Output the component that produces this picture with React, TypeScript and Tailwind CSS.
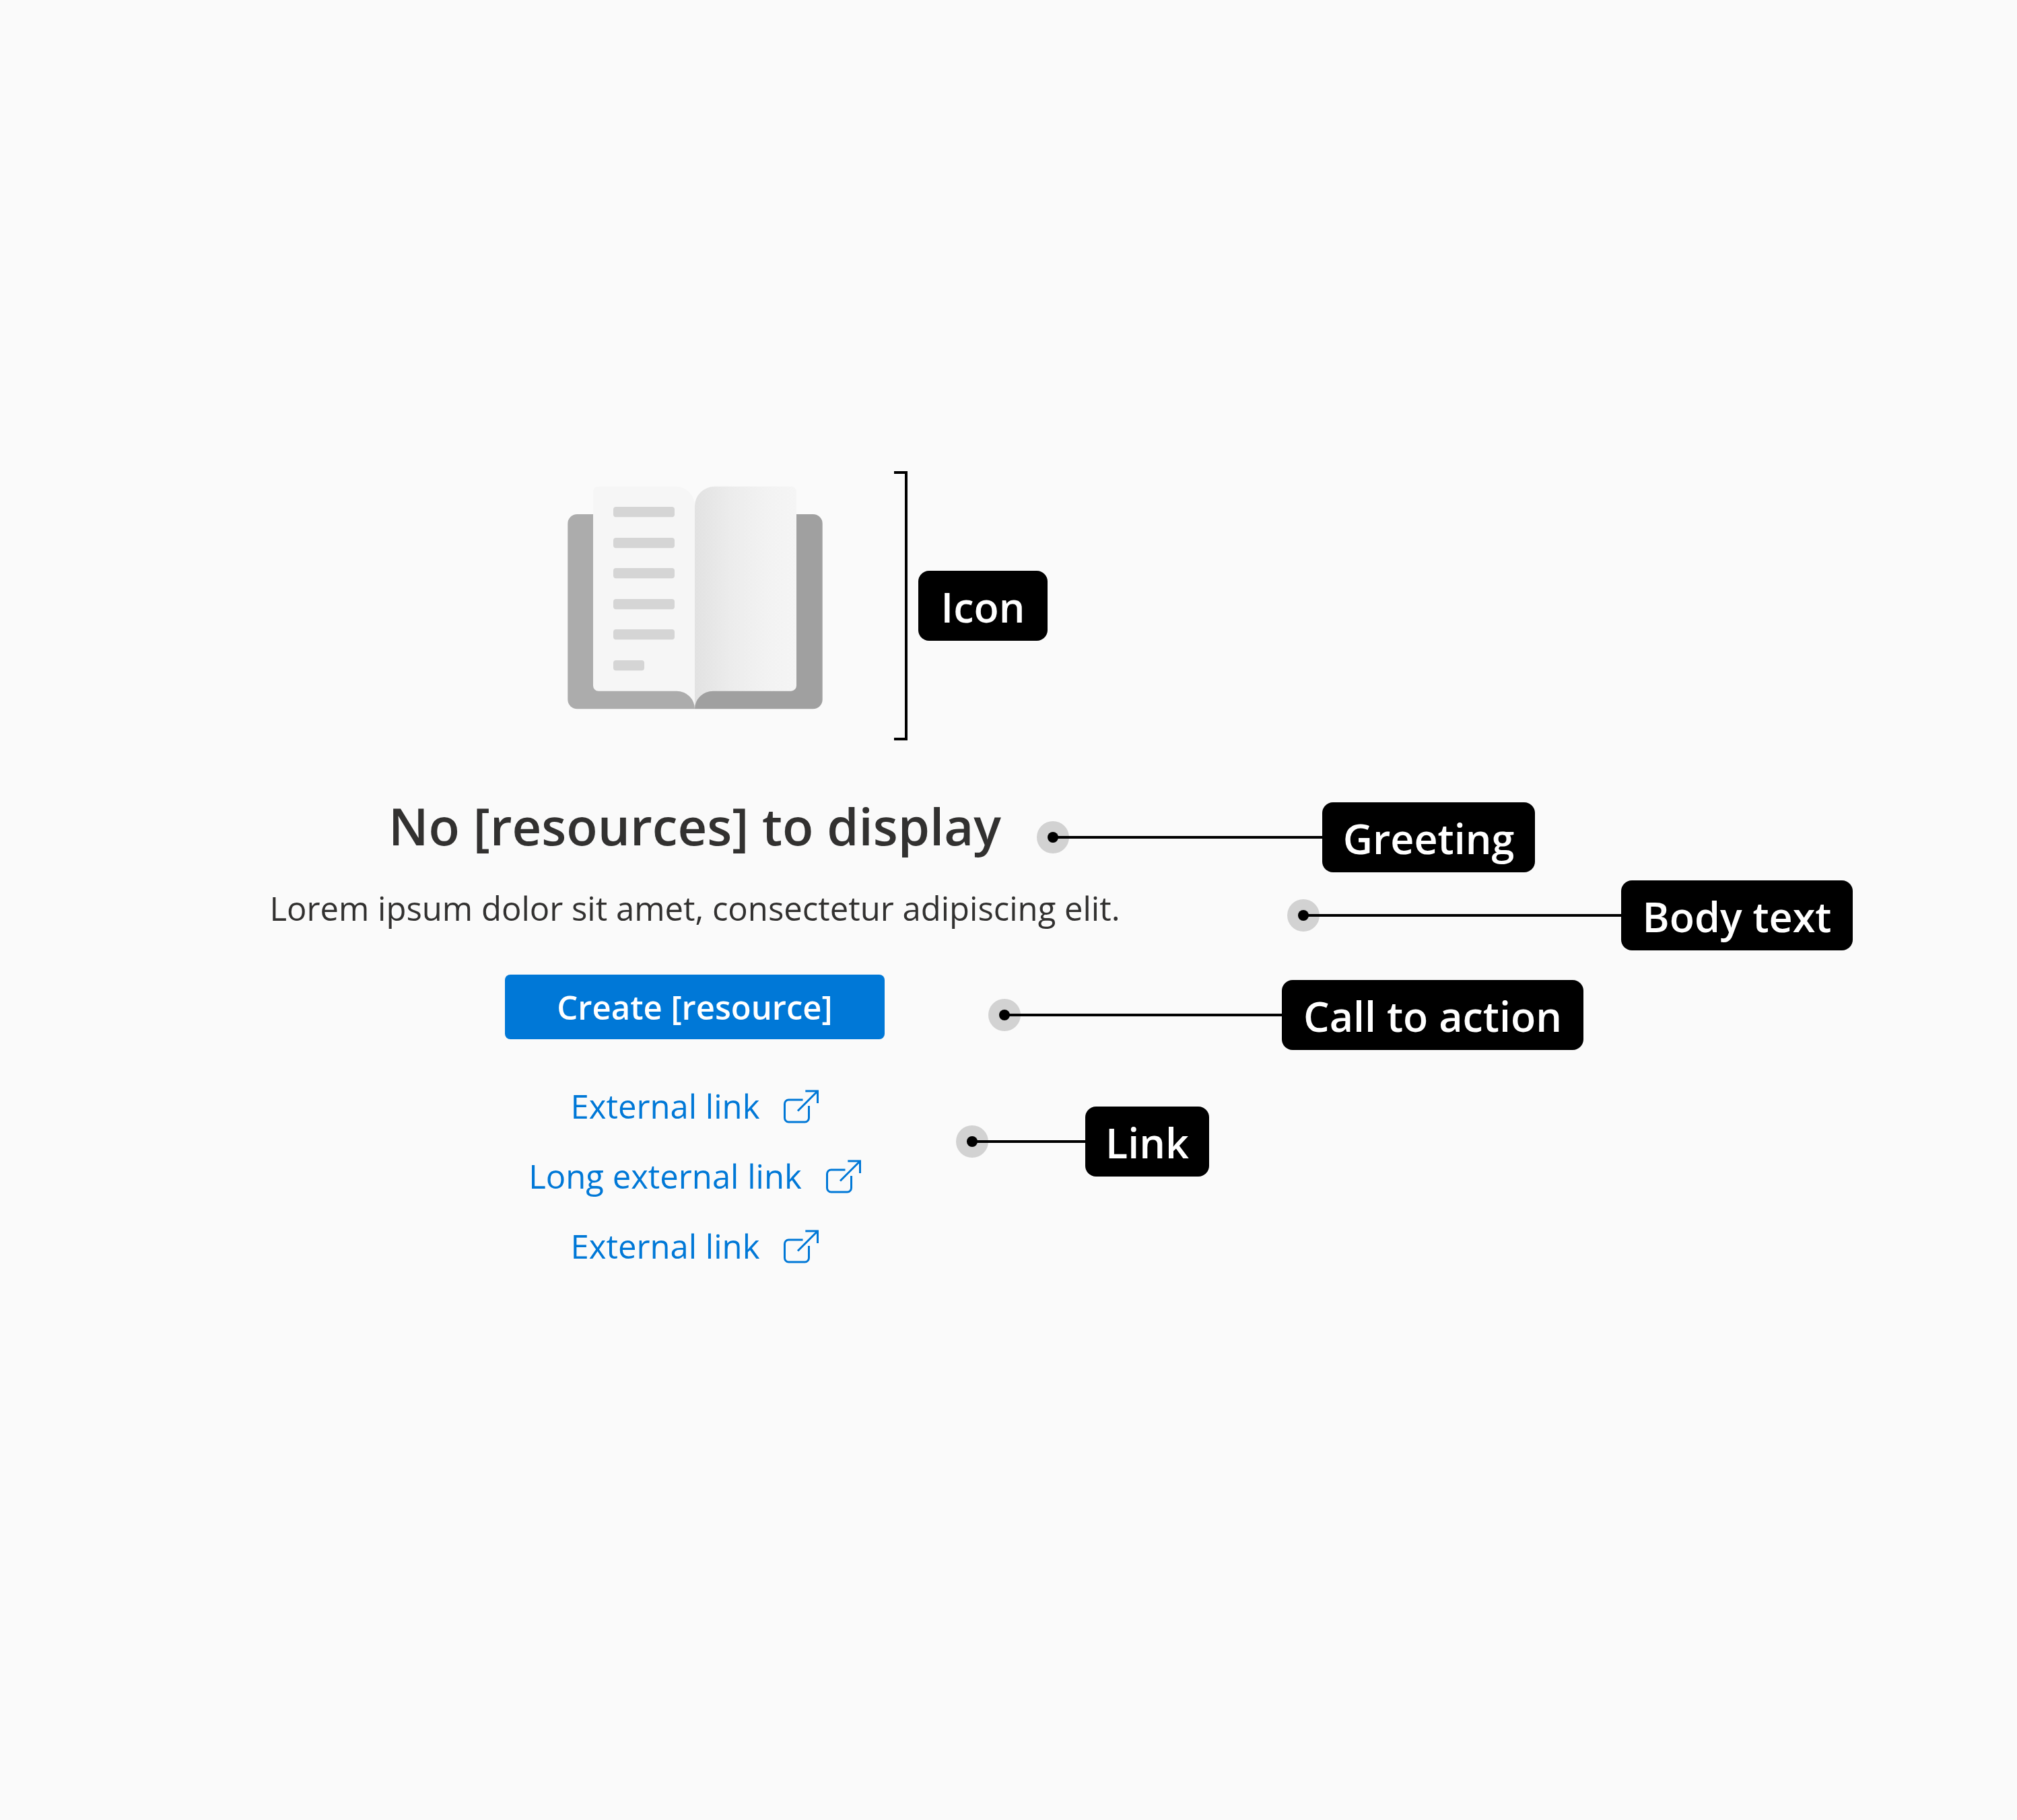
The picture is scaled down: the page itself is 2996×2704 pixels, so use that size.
import type { ReactNode } from "react";

function BookIcon() {
  const lines = [753, 799, 844, 890, 935];
  return (
    <svg viewBox="832 700 400 400" className="size-[400px] shrink-0" role="img" aria-label="Open book">
      <defs>
        <linearGradient id="page" x1="0" x2="1" y1="0" y2="0">
          <stop offset="0" stopColor="#e2e2e2" />
          <stop offset="0.35" stopColor="#ececec" />
          <stop offset="0.75" stopColor="#f3f3f3" />
          <stop offset="1" stopColor="#f5f5f5" />
        </linearGradient>
      </defs>
      <path d="M857.3 764H1032v289.3H857.3a14 14 0 0 1-14-14V778a14 14 0 0 1 14-14z" fill="#acacac" />
      <path d="M1032 764h175.7a14 14 0 0 1 14 14v261.300a14 14 0 0 1-14 14H1032z" fill="#a0a0a0" />
      <path d="M889 722.700h115a28 29 0 0 1 28 29v301.600a27 26.500 0 0 0-27-26.500H889a8 8 0 0 1-8-8V730.700a8 8 0 0 1 8-8z" fill="#f6f6f6" />
      <path d="M1062 722.700h113a8 8 0 0 1 8 8v288a8 8 0 0 1-8 8h-116a27 26.500 0 0 0-27 26.500V752a30 29.300 0 0 1 30-29.300z" fill="url(#page)" />
      {lines.map((y) => (
        <rect key={y} x="911" y={y} width="91" height="15.300" rx="4" fill="#d5d5d5" />
      ))}
      <rect x="911" y="981" width="46" height="15.300" rx="4" fill="#d5d5d5" />
    </svg>
  );
}

function ExternalIcon() {
  return (
    <svg viewBox="0 0 52 50" className="h-[50px] w-[52px] shrink-0" fill="none" stroke="currentColor" strokeWidth="3" aria-hidden="true">
      <path d="M28.500 15H7.500a6 6 0 0 0-6 6v21a6 6 0 0 0 6 6h24a6 6 0 0 0 6-6V24" />
      <path d="M32.300 2H50.500V20M21 31.500L50 2.500" />
    </svg>
  );
}

function Tag({ width, children }: { width: string; children: ReactNode }) {
  return (
    <span className={`flex h-[104px] shrink-0 items-center justify-center whitespace-nowrap rounded-2xl bg-black pt-1 text-[61px] font-semibold text-white ${width}`}>
      {children}
    </span>
  );
}

function Callout({ line, width, children }: { line: string; width: string; children: ReactNode }) {
  return (
    <div className="flex h-[104px] items-center">
      <span className="flex size-12 shrink-0 items-center justify-center rounded-full bg-[#d2d2d2]">
        <span className="size-4 rounded-full bg-black" />
      </span>
      <span className={`-ml-6 h-1 shrink-0 bg-black ${line}`} />
      <Tag width={width}>{children}</Tag>
    </div>
  );
}

function ExternalLink({ children }: { children: ReactNode }) {
  return (
    <a href="#" className="flex h-[104px] items-center gap-9 whitespace-nowrap text-[49px] text-[#0078d7]">
      {children}
      <ExternalIcon />
    </a>
  );
}

export default function App() {
  return (
    <main className="min-h-screen w-full bg-[#fafafa] pt-[700px] font-['Open_Sans','Noto_Sans',sans-serif] text-[#323130]">
      <section className="grid grid-cols-[736fr_592fr_1668fr]">
        <div className="col-start-2 flex justify-center">
          <BookIcon />
        </div>
        <div className="flex items-center gap-4">
          <span className="h-[400px] w-5 shrink-0 border-y-4 border-r-4 border-black" />
          <Tag width="w-[192px]">Icon</Tag>
        </div>
      </section>

      <section className="mt-[92px] grid grid-cols-[524fr_1016fr_1456fr]">
        <h1 className="col-start-2 whitespace-nowrap text-center text-[76px] leading-[70px] font-semibold">
          No [resources] to display
        </h1>
        <Callout line="w-[400px]" width="w-[316px]">Greeting</Callout>
      </section>

      <section className="mt-3 grid grid-cols-[152fr_1760fr_1084fr]">
        <p className="col-start-2 whitespace-nowrap text-center text-[49px] leading-[82px]">
          Lorem ipsum dolor sit amet, consectetur adipiscing elit.
        </p>
        <Callout line="w-[472px]" width="w-[344px]">Body text</Callout>
      </section>

      <section className="mt-9 grid grid-cols-[596fr_872fr_1528fr]">
        <div className="col-start-2 flex items-start justify-center">
          <button type="button" className="h-24 w-[564px] rounded-lg bg-[#0078d7] pt-0.5 text-[49px] font-semibold text-white">
            Create [resource]
          </button>
        </div>
        <div className="pt-2">
          <Callout line="w-[412px]" width="w-[448px]">Call to action</Callout>
        </div>
      </section>

      <section className="mt-8 grid grid-cols-[644fr_776fr_1576fr]">
        <nav aria-label="External links" className="col-start-2 flex flex-col items-center">
          <ExternalLink>External link</ExternalLink>
          <ExternalLink>Long external link</ExternalLink>
          <ExternalLink>External link</ExternalLink>
        </nav>
        <div className="pt-[52px]">
          <Callout line="w-[168px]" width="w-[184px]">Link</Callout>
        </div>
      </section>
    </main>
  );
}
